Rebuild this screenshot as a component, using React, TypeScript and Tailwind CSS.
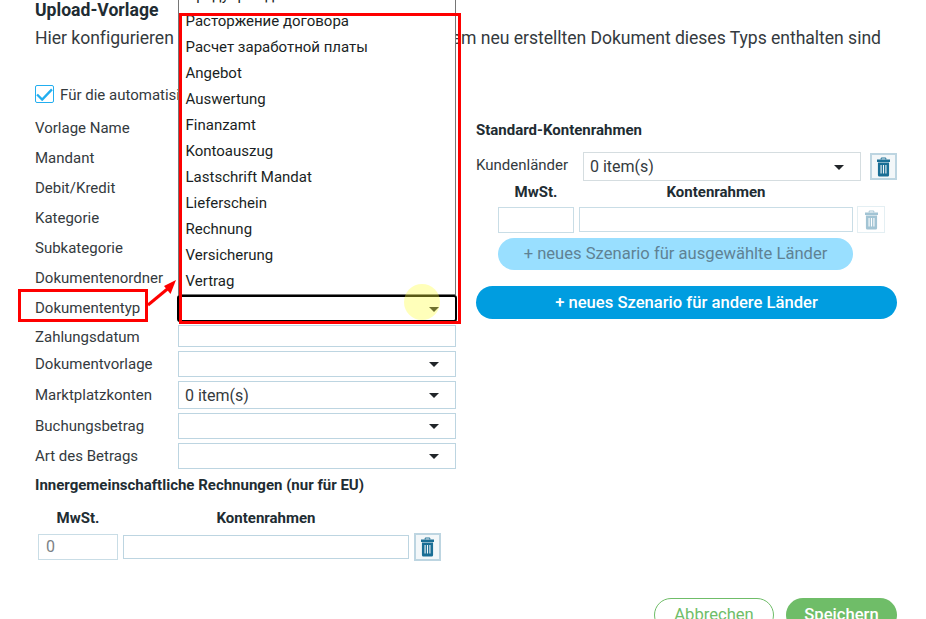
import React from "react";

const Caret = () => (
  <span className="absolute right-[16px] top-1/2 -mt-[2px] w-0 h-0 border-l-[5px] border-r-[5px] border-t-[5px] border-l-transparent border-r-transparent border-t-[#212529]" />
);

const Trash = ({ muted }: { muted?: boolean }) => (
  <svg width="13" height="20" viewBox="0 0 14 20" preserveAspectRatio="none" className={muted ? "opacity-40" : ""}>
    <path d="M4.500 2.500V1h5v1.500" fill="none" stroke="#1a6e95" strokeWidth="1" />
    <rect x="0" y="2.500" width="14" height="2.500" fill="#1a6e95" />
    <path fillRule="evenodd" d="M1 5.500h12V18a1.500 1.500 0 0 1-1.500 1.500h-9A1.500 1.500 0 0 1 1 18Zm2.800 2.500v8.500h1.200V8Zm2.600 0v8.500h1.200V8Zm2.600 0v8.500h1.200V8Z" fill="#1a6e95" />
  </svg>
);

const TrashBtn = ({ muted, className }: { muted?: boolean; className: string }) => (
  <div className={`flex items-center justify-center ${muted ? "border border-[#e4eff3] bg-white" : "border-2 border-[#bdd5e1] bg-[#f3f7f9]"} ${className}`}>
    <Trash muted={muted} />
  </div>
);

const Row = ({ label, h, mt, select, labelClass, children }: { label: string; h: number; mt: string; select?: boolean; labelClass?: string; children?: React.ReactNode }) => (
  <div className={`flex items-center ${mt}`} style={{ height: h }}>
    <div className={`w-[143px] shrink-0 text-[15px] text-[#343a3e] ${labelClass ?? ""}`}>{label}</div>
    <div className="relative h-full w-[278px] border border-[#bdd5e1] bg-white px-[6px] flex items-center text-[16px] text-[#343a3e]">
      {children}
      {select && <Caret />}
    </div>
  </div>
);

const items = [
  "Расторжение договора",
  "Расчет заработной платы",
  "Angebot",
  "Auswertung",
  "Finanzamt",
  "Kontoauszug",
  "Lastschrift Mandat",
  "Lieferschein",
  "Rechnung",
  "Versicherung",
  "Vertrag",
];

export default function App() {
  return (
    <div className="relative h-[619px] w-[926px] overflow-hidden bg-white font-['Roboto',sans-serif] text-[#343a3e]">
      <div className="pl-[35px] pt-0">
        <h1 className="text-[17.600px] font-bold leading-[20px] text-[#212c32]">Upload-Vorlage</h1>
        <p className="mt-[7px] whitespace-nowrap text-[17.600px] leading-[22px] tracking-[-0.04px] text-[#343a3e]">
          Hier konfigurieren Sie diese Standard-Felder, die in jedem neu erstellten Dokument dieses Typs enthalten sind
        </p>

        <div className="mt-[36px] flex gap-[20px]">
          <div className="w-[421px] shrink-0">
            <label className="flex h-[20px] items-center gap-[6px] text-[15px]">
              <span className="flex h-[18px] w-[19px] items-center justify-center self-start rounded-[2px] border border-[#22aef0]">
                <svg width="17" height="13" viewBox="0 0 18 14">
                  <path d="M1 7l5.500 5.500L17 1.500" fill="none" stroke="#22aef0" strokeWidth="2.500" />
                </svg>
              </span>
              <span className="whitespace-nowrap pt-[1px]">Für die automatisierte Verarbeitung</span>
            </label>

            <div className="mt-[10px]">
              <Row label="Vorlage Name" h={26} mt="mt-0" />
              <Row label="Mandant" h={26} mt="mt-[4px]" />
              <Row label="Debit/Kredit" h={26} mt="mt-[4px]" />
              <Row label="Kategorie" h={26} mt="mt-[4px]" />
              <Row label="Subkategorie" h={26} mt="mt-[4px]" />
              <Row label="Dokumentenordner" h={26} mt="mt-[4px]" />
              <Row label="Dokumententyp" h={27} mt="mt-[4px]" select />
              <Row label="Zahlungsdatum" h={22} mt="mt-[3px]" labelClass="pt-[3px]" />
              <Row label="Dokumentvorlage" h={26} mt="mt-[4px]" select />
              <Row label="Marktplatzkonten" h={28} mt="mt-[4px]" select>
                <span className="pt-[2px]">0 item(s)</span>
              </Row>
              <Row label="Buchungsbetrag" h={26} mt="mt-[4px]" select />
              <Row label="Art des Betrags" h={26} mt="mt-[4px]" select />
            </div>

            <h2 className="mt-[8px] text-[15px] font-bold leading-[17px] text-[#212c32]">
              Innergemeinschaftliche Rechnungen (nur für EU)
            </h2>
            <div className="mt-[16px] flex pl-[3px] text-[15px] font-bold leading-[17px] text-[#212c32]">
              <div className="w-[80px] text-center">MwSt.</div>
              <div className="ml-[5px] w-[286px] text-center">Kontenrahmen</div>
            </div>
            <div className="mt-[6px] flex items-center pl-[3px]">
              <div className="flex h-[26px] w-[80px] items-center border border-[#c9dde6] px-[7px] text-[16px] text-[#7b8286]">0</div>
              <div className="ml-[5px] h-[24px] w-[286px] border border-[#bdd5e1]" />
              <TrashBtn className="ml-[5px] h-[28px] w-[27px]" />
            </div>
          </div>

          <div className="w-[421px] pt-[37px]">
            <h2 className="text-[15px] font-bold leading-[17px] text-[#212c32]">Standard-Kontenrahmen</h2>
            <div className="mt-[13px] flex items-center">
              <div className="w-[107px] -mt-[3px] text-[15px]">Kundenländer</div>
              <div className="relative flex h-[29px] w-[278px] items-center border border-[#d5dde0] px-[6px] text-[16px]">
                0 item(s)
                <Caret />
              </div>
              <TrashBtn className="ml-[9px] h-[27px] w-[27px]" />
            </div>
            <div className="mt-[3px] flex pl-[22px] text-[15px] font-bold leading-[17px] text-[#212c32]">
              <div className="w-[76px] text-center">MwSt.</div>
              <div className="ml-[5px] w-[274px] text-center">Kontenrahmen</div>
            </div>
            <div className="mt-[6px] flex items-start pl-[22px]">
              <div className="h-[26px] w-[76px] border border-[#c9dde6]" />
              <div className="ml-[5px] h-[25px] w-[274px] border border-[#c9dde6]" />
              <TrashBtn muted className="ml-[4px] -mt-[1px] h-[27px] w-[28px]" />
            </div>
            <div className="ml-[22px] mt-[5px] flex h-[32px] w-[355px] items-center justify-center rounded-full bg-[#99dfff] text-[16.600px] text-[#5f8294]">
              + neues Szenario für ausgewählte Länder
            </div>
            <div className="mt-[16px] flex h-[33px] w-[421px] items-center justify-center rounded-full bg-[#009de0] pt-[1px] text-[16.600px] font-medium text-white">
              + neues Szenario für andere Länder
            </div>
          </div>
        </div>
      </div>

      {/* open list over the form */}
      <div className="absolute left-[178px] top-[-19px] w-[278px] border border-[#767676] bg-white pl-[6.500px] text-[15px] leading-[26px] text-[#1a1f24]">
        <div className="h-[26px] whitespace-nowrap">Предупреждение</div>
        {items.map((t) => (
          <div key={t} className="h-[26px] whitespace-nowrap">{t}</div>
        ))}
      </div>
      <div className="absolute left-[177px] top-[295px] h-[27px] w-[280px] rounded-[3px] border-2 border-black" />

      {/* screenshot annotations */}
      <div className="absolute left-[404px] top-[284px] h-[36px] w-[36px] rounded-full bg-[#ffff3a]/35" />
      <div className="absolute left-[179px] top-[13px] h-[311px] w-[282px] border-[3px] border-[#fe0000]" />
      <div className="absolute left-[18px] top-[289px] h-[33px] w-[130px] border-[3px] border-[#fe0000]" />
      <svg className="absolute left-[145px] top-[278px]" width="34" height="34" viewBox="0 0 34 34">
        <path d="M3 27L26 8" stroke="#fe0000" strokeWidth="3" />
        <path d="M31 2L19 8l6.500 8z" fill="#fe0000" />
      </svg>

      {/* footer actions, cut off by the bottom edge */}
      <div className="absolute left-[654px] top-[598px] flex gap-[12px]">
        <div className="flex h-[34px] w-[120px] items-center justify-center rounded-full border border-[#6fbd68] text-[16.600px] text-[#6fbd68]">Abbrechen</div>
        <div className="flex h-[34px] w-[111px] items-center justify-center rounded-full bg-[#6fbd68] text-[16.600px] font-medium text-white">Speichern</div>
      </div>
    </div>
  );
}
